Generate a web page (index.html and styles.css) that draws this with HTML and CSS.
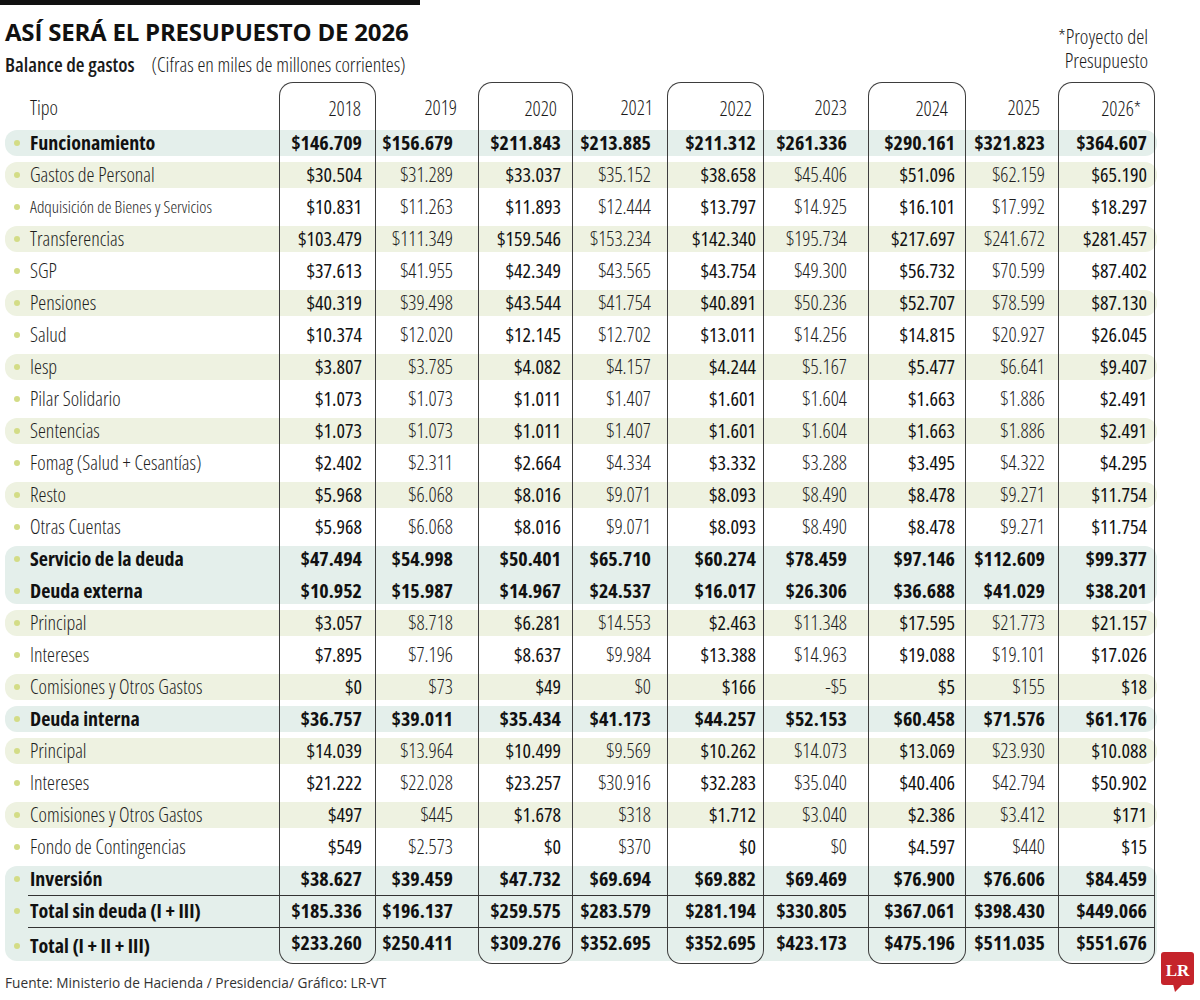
FILE: index.html
```html
<!DOCTYPE html>
<html lang="es">
<head>
<meta charset="utf-8">
<title>Así será el presupuesto de 2026</title>
<link rel="stylesheet" href="styles.css">
</head>
<body>
<div class="page">
  <header class="top">
    <div class="heading">
      <div class="bar"></div>
      <h1 class="title">ASÍ SERÁ EL PRESUPUESTO DE 2026</h1>
      <p class="subtitle"><span class="sub-strong">Balance de gastos</span><span class="sub-light">(Cifras en miles de millones corrientes)</span></p>
    </div>
    <div class="note"><span class="note-line">*Proyecto del</span><span class="note-line">Presupuesto</span></div>
  </header>

  <div class="table">
    <div class="row head">
      <div class="lbl plain">Tipo</div>
      <div>2018</div><div>2019</div><div>2020</div><div>2021</div><div>2022</div><div>2023</div><div>2024</div><div>2025</div><div>2026*</div>
    </div>

    <div class="row main b"><div class="lbl">Funcionamiento</div><div>$146.709</div><div>$156.679</div><div>$211.843</div><div>$213.885</div><div>$211.312</div><div>$261.336</div><div>$290.161</div><div>$321.823</div><div>$364.607</div></div>
    <div class="row green"><div class="lbl">Gastos de Personal</div><div>$30.504</div><div>$31.289</div><div>$33.037</div><div>$35.152</div><div>$38.658</div><div>$45.406</div><div>$51.096</div><div>$62.159</div><div>$65.190</div></div>
    <div class="row"><div class="lbl small">Adquisición de Bienes y Servicios</div><div>$10.831</div><div>$11.263</div><div>$11.893</div><div>$12.444</div><div>$13.797</div><div>$14.925</div><div>$16.101</div><div>$17.992</div><div>$18.297</div></div>
    <div class="row green"><div class="lbl">Transferencias</div><div>$103.479</div><div>$111.349</div><div>$159.546</div><div>$153.234</div><div>$142.340</div><div>$195.734</div><div>$217.697</div><div>$241.672</div><div>$281.457</div></div>
    <div class="row"><div class="lbl">SGP</div><div>$37.613</div><div>$41.955</div><div>$42.349</div><div>$43.565</div><div>$43.754</div><div>$49.300</div><div>$56.732</div><div>$70.599</div><div>$87.402</div></div>
    <div class="row green"><div class="lbl">Pensiones</div><div>$40.319</div><div>$39.498</div><div>$43.544</div><div>$41.754</div><div>$40.891</div><div>$50.236</div><div>$52.707</div><div>$78.599</div><div>$87.130</div></div>
    <div class="row"><div class="lbl">Salud</div><div>$10.374</div><div>$12.020</div><div>$12.145</div><div>$12.702</div><div>$13.011</div><div>$14.256</div><div>$14.815</div><div>$20.927</div><div>$26.045</div></div>
    <div class="row green"><div class="lbl">Iesp</div><div>$3.807</div><div>$3.785</div><div>$4.082</div><div>$4.157</div><div>$4.244</div><div>$5.167</div><div>$5.477</div><div>$6.641</div><div>$9.407</div></div>
    <div class="row"><div class="lbl">Pilar Solidario</div><div>$1.073</div><div>$1.073</div><div>$1.011</div><div>$1.407</div><div>$1.601</div><div>$1.604</div><div>$1.663</div><div>$1.886</div><div>$2.491</div></div>
    <div class="row green"><div class="lbl">Sentencias</div><div>$1.073</div><div>$1.073</div><div>$1.011</div><div>$1.407</div><div>$1.601</div><div>$1.604</div><div>$1.663</div><div>$1.886</div><div>$2.491</div></div>
    <div class="row"><div class="lbl">Fomag (Salud + Cesantías)</div><div>$2.402</div><div>$2.311</div><div>$2.664</div><div>$4.334</div><div>$3.332</div><div>$3.288</div><div>$3.495</div><div>$4.322</div><div>$4.295</div></div>
    <div class="row green"><div class="lbl">Resto</div><div>$5.968</div><div>$6.068</div><div>$8.016</div><div>$9.071</div><div>$8.093</div><div>$8.490</div><div>$8.478</div><div>$9.271</div><div>$11.754</div></div>
    <div class="row"><div class="lbl">Otras Cuentas</div><div>$5.968</div><div>$6.068</div><div>$8.016</div><div>$9.071</div><div>$8.093</div><div>$8.490</div><div>$8.478</div><div>$9.271</div><div>$11.754</div></div>

    <div class="row main b join-b"><div class="lbl">Servicio de la deuda</div><div>$47.494</div><div>$54.998</div><div>$50.401</div><div>$65.710</div><div>$60.274</div><div>$78.459</div><div>$97.146</div><div>$112.609</div><div>$99.377</div></div>
    <div class="row main b join-t"><div class="lbl">Deuda externa</div><div>$10.952</div><div>$15.987</div><div>$14.967</div><div>$24.537</div><div>$16.017</div><div>$26.306</div><div>$36.688</div><div>$41.029</div><div>$38.201</div></div>
    <div class="row green"><div class="lbl">Principal</div><div>$3.057</div><div>$8.718</div><div>$6.281</div><div>$14.553</div><div>$2.463</div><div>$11.348</div><div>$17.595</div><div>$21.773</div><div>$21.157</div></div>
    <div class="row"><div class="lbl">Intereses</div><div>$7.895</div><div>$7.196</div><div>$8.637</div><div>$9.984</div><div>$13.388</div><div>$14.963</div><div>$19.088</div><div>$19.101</div><div>$17.026</div></div>
    <div class="row green"><div class="lbl">Comisiones y Otros Gastos</div><div>$0</div><div>$73</div><div>$49</div><div>$0</div><div>$166</div><div>-$5</div><div>$5</div><div>$155</div><div>$18</div></div>

    <div class="row main b"><div class="lbl">Deuda interna</div><div>$36.757</div><div>$39.011</div><div>$35.434</div><div>$41.173</div><div>$44.257</div><div>$52.153</div><div>$60.458</div><div>$71.576</div><div>$61.176</div></div>
    <div class="row green"><div class="lbl">Principal</div><div>$14.039</div><div>$13.964</div><div>$10.499</div><div>$9.569</div><div>$10.262</div><div>$14.073</div><div>$13.069</div><div>$23.930</div><div>$10.088</div></div>
    <div class="row"><div class="lbl">Intereses</div><div>$21.222</div><div>$22.028</div><div>$23.257</div><div>$30.916</div><div>$32.283</div><div>$35.040</div><div>$40.406</div><div>$42.794</div><div>$50.902</div></div>
    <div class="row green"><div class="lbl">Comisiones y Otros Gastos</div><div>$497</div><div>$445</div><div>$1.678</div><div>$318</div><div>$1.712</div><div>$3.040</div><div>$2.386</div><div>$3.412</div><div>$171</div></div>
    <div class="row"><div class="lbl">Fondo de Contingencias</div><div>$549</div><div>$2.573</div><div>$0</div><div>$370</div><div>$0</div><div>$0</div><div>$4.597</div><div>$440</div><div>$15</div></div>

    <div class="row main b join-b"><div class="lbl">Inversión</div><div>$38.627</div><div>$39.459</div><div>$47.732</div><div>$69.694</div><div>$69.882</div><div>$69.469</div><div>$76.900</div><div>$76.606</div><div>$84.459</div></div>
    <div class="row main b join-t join-b ruled"><div class="lbl">Total sin deuda (I + III)</div><div>$185.336</div><div>$196.137</div><div>$259.575</div><div>$283.579</div><div>$281.194</div><div>$330.805</div><div>$367.061</div><div>$398.430</div><div>$449.066</div></div>
    <div class="row main b join-t ruled last"><div class="lbl">Total (I + II + III)</div><div>$233.260</div><div>$250.411</div><div>$309.276</div><div>$352.695</div><div>$352.695</div><div>$423.173</div><div>$475.196</div><div>$511.035</div><div>$551.676</div></div>
  </div>

  <footer class="foot">
    <p class="source">Fuente: Ministerio de Hacienda / Presidencia/ Gráfico: LR-VT</p>
    <svg class="logo" width="34" height="41" viewBox="0 0 34 41" aria-label="LR">
      <rect x="0" y="0" width="33" height="33" rx="3" fill="#c5242b"/>
      <path d="M12 32 L22 32 L14 40 Z" fill="#c5242b"/>
      <text x="16.5" y="23.5" text-anchor="middle" font-family="Liberation Serif, serif" font-weight="700" font-size="17" fill="#ffffff">LR</text>
    </svg>
  </footer>
</div>
</body>
</html>
```
FILE: styles.css
```css
* { box-sizing: border-box; }

html, body {
  margin: 0;
  padding: 0;
  background: #ffffff;
}

body {
  font-family: "Open Sans", "Roboto Condensed", sans-serif;
  font-stretch: 75%;
  color: #1a1a1a;
}

.page {
  width: 1200px;
  padding-left: 5px;
}

/* ---------- header ---------- */
.top {
  display: flex;
  justify-content: space-between;
  width: 1150px;
  height: 82px;
}

.bar {
  width: 420px;
  height: 5px;
  margin-left: -5px;
  background: #111111;
}

.title {
  margin: 12px 0 0 0;
  font-weight: 700;
  font-stretch: 100%;
  font-size: 24px;
  line-height: 29px;
  color: #111111;
  letter-spacing: -0.2px;
}

.subtitle {
  margin: 7px 0 0 0;
  font-size: 20px;
  line-height: 24px;
  display: flex;
  gap: 17px;
}

.sub-strong {
  font-weight: 600;
  color: #1a1a1a;
}

.sub-light {
  font-weight: 300;
  color: #1a1a1a;
}

.note {
  padding-top: 25px;
  padding-right: 7px;
  display: flex;
  flex-direction: column;
  align-items: flex-end;
  font-size: 20.5px;
  font-weight: 300;
  color: #1a1a1a;
}

.note-line {
  display: block;
  line-height: 23.5px;
  height: 23.5px;
}

/* ---------- table ---------- */
.table {
  width: 1150px;
}

.row {
  position: relative;
  display: grid;
  grid-template-columns: 274px 97px 102px 95px 94px 97px 104px 98px 92px 97px;
  height: 32px;
  font-size: 20px;
  line-height: 32px;
}

.row::before {
  content: "";
  position: absolute;
  left: 0;
  right: -2px;
  top: 3px;
  bottom: 3px;
  border-radius: 12px;
  z-index: 0;
}

.row.green::before { background: #eef2e1; }
.row.main::before { background: #e4efeb; }

.row.join-b::before {
  bottom: 0;
  border-bottom-left-radius: 0;
  border-bottom-right-radius: 0;
}

.row.join-t::before {
  top: 0;
  border-top-left-radius: 0;
  border-top-right-radius: 0;
}

.row.last::before {
  border-bottom-left-radius: 12px;
  border-bottom-right-radius: 12px;
}

.row.ruled::after {
  content: "";
  position: absolute;
  left: 23px;
  right: 0;
  top: 0;
  height: 1px;
  background: #333333;
  z-index: 2;
}

.row > div {
  position: relative;
  z-index: 1;
  text-align: right;
  white-space: nowrap;
}

/* value cells: light weight in plain columns, medium in boxed columns */
.row > div:nth-child(odd) {
  font-weight: 300;
  color: #1e1e1e;
}
.row > div:nth-child(even) {
  font-weight: 500;
  color: #111111;
  border-left: 1px solid #3d3d3d;
  border-right: 1px solid #3d3d3d;
}

.row > div:nth-child(2)  { padding-right: 13px; }
.row > div:nth-child(3)  { padding-right: 25px; }
.row > div:nth-child(4)  { padding-right: 11px; }
.row > div:nth-child(5)  { padding-right: 16px; }
.row > div:nth-child(6)  { padding-right: 7px; }
.row > div:nth-child(7)  { padding-right: 21px; }
.row > div:nth-child(8)  { padding-right: 10px; }
.row > div:nth-child(9)  { padding-right: 13px; }
.row > div:nth-child(10) { padding-right: 7px; }

.row.b > div {
  font-weight: 700;
  color: #111111;
}

/* label column */
.row > .lbl {
  text-align: left;
  display: flex;
  align-items: center;
  padding-left: 9px;
  font-size: 20px;
  font-weight: 300;
  color: #1a1a1a;
  border: none;
}

.row > .lbl::before {
  content: "";
  display: inline-block;
  width: 6px;
  height: 6px;
  border-radius: 50%;
  background: #d3dc86;
  margin-right: 10px;
  flex: none;
}

.row.b > .lbl {
  font-size: 20px;
  font-weight: 700;
  color: #111111;
}

.row > .lbl.small {
  font-size: 17px;
}

/* header row */
.row.head {
  height: 45px;
  line-height: 24px;
}

.row.head > div {
  padding-top: 14px;
  font-size: 20px;
  font-weight: 300;
  color: #1a1a1a;
}

.row.head > div:nth-child(even) {
  border-top: 1px solid #3d3d3d;
  border-top-left-radius: 14px;
  border-top-right-radius: 14px;
}

.row.head > .lbl {
  padding-left: 25px;
  font-size: 20px;
  align-items: flex-start;
}

.row.head > .lbl::before { display: none; }

.row.head > div:nth-child(2) { padding-right: 14px; }
.row.head > div:nth-child(3) { padding-right: 21px; }
.row.head > div:nth-child(4) { padding-right: 15px; }
.row.head > div:nth-child(5) { padding-right: 14px; }
.row.head > div:nth-child(6) { padding-right: 11px; }
.row.head > div:nth-child(7) { padding-right: 21px; }
.row.head > div:nth-child(8) { padding-right: 17px; }
.row.head > div:nth-child(9) { padding-right: 18px; }
.row.head > div:nth-child(10) { padding-right: 13px; }

/* last row closes the boxes */
.row.last {
  height: 37px;
}

.row.last > div:nth-child(even) {
  border-bottom: 1px solid #3d3d3d;
  border-bottom-left-radius: 14px;
  border-bottom-right-radius: 14px;
}

/* ---------- footer ---------- */
.foot {
  display: flex;
  justify-content: space-between;
  align-items: flex-start;
  width: 1190px;
}

.source {
  margin: 9px 0 0 0;
  font-size: 13.7px;
  font-stretch: 90%;
  font-weight: 400;
  line-height: 20px;
  color: #333333;
}

.logo {
  display: block;
  margin-top: -12px;
}
```
